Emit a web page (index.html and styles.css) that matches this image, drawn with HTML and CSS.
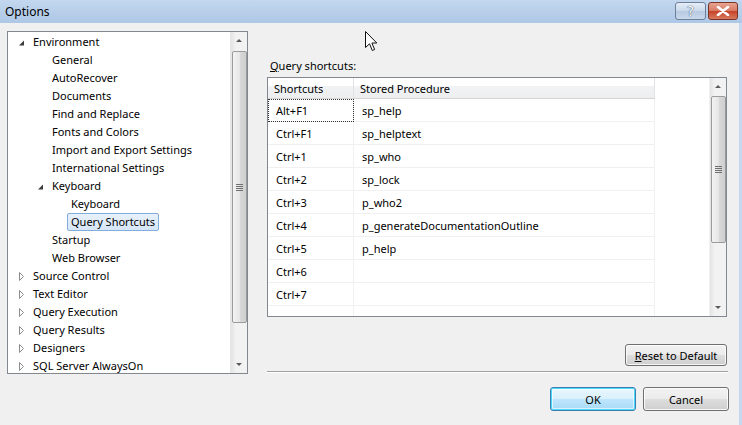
FILE: index.html
```html
<!DOCTYPE html>
<html lang="en">
<head>
    <meta charset="UTF-8">
    <meta name="viewport" content="width=device-width, initial-scale=1.0">
    <title>Options</title>
    <link rel="stylesheet" href="styles.css">
</head>
<body>
    <div class="window">
        <div class="titlebar">
            <span class="title">Options</span>
            <div class="caption">
                <span class="cap cap-help">?</span>
                <span class="cap cap-close">
                    <svg width="14" height="10" viewBox="0 0 14 10"><path d="M2 1 L12 9 M12 1 L2 9" stroke="#fff" stroke-width="2.6" stroke-linecap="round"/></svg>
                </span>
            </div>
        </div>

        <div class="client">
            <!-- options tree -->
            <div class="tree">
                <ul class="nodes">
                    <li class="node l0"><span class="tog"><svg width="16" height="18" viewBox="0 0 16 18"><path d="M11 7.5 L11 12.5 L6 12.5 Z" fill="#3c3c3c"/></svg></span><span class="txt">Environment</span></li>
                    <li class="node l1"><span class="tog"></span><span class="txt">General</span></li>
                    <li class="node l1"><span class="tog"></span><span class="txt">AutoRecover</span></li>
                    <li class="node l1"><span class="tog"></span><span class="txt">Documents</span></li>
                    <li class="node l1"><span class="tog"></span><span class="txt">Find and Replace</span></li>
                    <li class="node l1"><span class="tog"></span><span class="txt">Fonts and Colors</span></li>
                    <li class="node l1"><span class="tog"></span><span class="txt">Import and Export Settings</span></li>
                    <li class="node l1"><span class="tog"></span><span class="txt">International Settings</span></li>
                    <li class="node l1"><span class="tog"><svg width="16" height="18" viewBox="0 0 16 18"><path d="M11 7.5 L11 12.5 L6 12.5 Z" fill="#3c3c3c"/></svg></span><span class="txt">Keyboard</span></li>
                    <li class="node l2"><span class="tog"></span><span class="txt">Keyboard</span></li>
                    <li class="node l2"><span class="tog"></span><span class="txt selected">Query Shortcuts</span></li>
                    <li class="node l1"><span class="tog"></span><span class="txt">Startup</span></li>
                    <li class="node l1"><span class="tog"></span><span class="txt">Web Browser</span></li>
                    <li class="node l0"><span class="tog"><svg width="16" height="18" viewBox="0 0 16 18"><path d="M6.5 5.5 L10.5 9.5 L6.5 13.5 Z" fill="#fff" stroke="#8c8c8c"/></svg></span><span class="txt">Source Control</span></li>
                    <li class="node l0"><span class="tog"><svg width="16" height="18" viewBox="0 0 16 18"><path d="M6.5 5.5 L10.5 9.5 L6.5 13.5 Z" fill="#fff" stroke="#8c8c8c"/></svg></span><span class="txt">Text Editor</span></li>
                    <li class="node l0"><span class="tog"><svg width="16" height="18" viewBox="0 0 16 18"><path d="M6.5 5.5 L10.5 9.5 L6.5 13.5 Z" fill="#fff" stroke="#8c8c8c"/></svg></span><span class="txt">Query Execution</span></li>
                    <li class="node l0"><span class="tog"><svg width="16" height="18" viewBox="0 0 16 18"><path d="M6.5 5.5 L10.5 9.5 L6.5 13.5 Z" fill="#fff" stroke="#8c8c8c"/></svg></span><span class="txt">Query Results</span></li>
                    <li class="node l0"><span class="tog"><svg width="16" height="18" viewBox="0 0 16 18"><path d="M6.5 5.5 L10.5 9.5 L6.5 13.5 Z" fill="#fff" stroke="#8c8c8c"/></svg></span><span class="txt">Designers</span></li>
                    <li class="node l0"><span class="tog"><svg width="16" height="18" viewBox="0 0 16 18"><path d="M6.5 5.5 L10.5 9.5 L6.5 13.5 Z" fill="#fff" stroke="#8c8c8c"/></svg></span><span class="txt">SQL Server AlwaysOn</span></li>
                </ul>
                <div class="vscroll tree-scroll">
                    <span class="arrow up"></span>
                    <div class="thumb"><span class="grip"></span></div>
                    <span class="arrow down"></span>
                </div>
            </div>

            <!-- query shortcuts page -->
            <div class="page">
                <div class="caption-label"><u>Q</u>uery shortcuts:</div>
                <div class="grid">
                    <div class="grid-view">
                        <table class="shortcuts">
                            <thead>
                                <tr><th class="c1">Shortcuts</th><th class="c2">Stored Procedure</th></tr>
                            </thead>
                            <tbody>
                                <tr><td class="c1 focus">Alt+F1</td><td class="c2">sp_help</td></tr>
                                <tr><td class="c1">Ctrl+F1</td><td class="c2">sp_helptext</td></tr>
                                <tr><td class="c1">Ctrl+1</td><td class="c2">sp_who</td></tr>
                                <tr><td class="c1">Ctrl+2</td><td class="c2">sp_lock</td></tr>
                                <tr><td class="c1">Ctrl+3</td><td class="c2">p_who2</td></tr>
                                <tr><td class="c1">Ctrl+4</td><td class="c2">p_generateDocumentationOutline</td></tr>
                                <tr><td class="c1">Ctrl+5</td><td class="c2">p_help</td></tr>
                                <tr><td class="c1">Ctrl+6</td><td class="c2"></td></tr>
                                <tr><td class="c1">Ctrl+7</td><td class="c2"></td></tr>
                                <tr><td class="c1"></td><td class="c2"></td></tr>
                            </tbody>
                        </table>
                    </div>
                    <div class="vscroll grid-scroll">
                        <span class="arrow up"></span>
                        <div class="thumb"><span class="grip"></span></div>
                        <span class="arrow down"></span>
                    </div>
                </div>
                <div class="reset-row">
                    <button class="btn reset"><u>R</u>eset to Default</button>
                </div>
                <div class="separator"></div>
                <div class="actions">
                    <button class="btn default">OK</button>
                    <button class="btn">Cancel</button>
                </div>
            </div>
        </div>

        <svg class="pointer" width="13" height="21" viewBox="0 0 13 21">
            <path d="M0.5 0.5 L0.5 16.5 L4.5 12.8 L7.3 19.5 L9.6 18.5 L6.9 12 L11.8 12 Z" fill="#fff" stroke="#111" stroke-width="1" stroke-linejoin="round"/>
        </svg>
    </div>
</body>
</html>
```

FILE: styles.css
```css
html, body {
    margin: 0;
    padding: 0;
}
body {
    font-family: "Noto Sans", "Open Sans", sans-serif;
    font-size: 11px;
    color: #000;
    background: #f0f0f0;
}
.window {
    position: relative;
    width: 742px;
    height: 425px;
    overflow: hidden;
    display: flex;
    flex-direction: column;
}

/* title bar */
.titlebar {
    height: 23px;
    flex: none;
    display: flex;
    align-items: center;
    justify-content: space-between;
    background: linear-gradient(#c3d7ee, #adc7e6);
    padding: 0 4px 0 5px;
}
.title {
    font-size: 12px;
    line-height: 16px;
}
.caption {
    display: flex;
    gap: 2px;
    align-self: flex-start;
    margin-top: 2px;
}
.cap {
    height: 18px;
    border: 1px solid #6d7f99;
    border-radius: 3px;
    box-sizing: border-box;
    display: flex;
    align-items: center;
    justify-content: center;
}
.cap-help {
    width: 31px;
    background: linear-gradient(#e6eef8 0%, #c9d8ea 50%, #b6c9e1 51%, #c9d9ec 100%);
    color: #fff;
    font-family: "DejaVu Sans", sans-serif;
    font-size: 14px;
    text-shadow: 0 0 1px #35506f, 0 0 1px #35506f;
}
.cap-close {
    width: 30px;
    border-color: #7a3325;
    background: linear-gradient(#e8a593 0%, #d77862 50%, #c7432a 51%, #d67a5e 100%);
}

/* client area */
.client {
    flex: 1;
    display: flex;
    gap: 19px;
    padding: 8px 0 0 7px;
    border-right: 3px solid #c4d7ee;
}

/* tree */
.tree {
    width: 241px;
    height: 343px;
    box-sizing: border-box;
    border: 1px solid #828790;
    background: #fff;
    display: flex;
    flex: none;
}
.nodes {
    list-style: none;
    margin: 0;
    padding: 1px 0 0;
    flex: 1;
    overflow: hidden;
}
.node {
    height: 18px;
    display: flex;
    align-items: center;
    white-space: nowrap;
}
.node.l0 { padding-left: 5px; }
.node.l1 { padding-left: 24px; }
.node.l2 { padding-left: 43px; }
.tog {
    width: 16px;
    height: 18px;
    flex: none;
}
.tog svg {
    display: block;
}
.txt {
    padding: 0 3px;
    border: 1px solid transparent;
    border-radius: 2px;
    line-height: 16px;
}
.txt.selected {
    background: linear-gradient(#e8f1fb, #d6e6f8);
    border-color: #84acdd;
}

/* scroll bars */
.vscroll {
    width: 17px;
    flex: none;
    box-sizing: border-box;
    background: linear-gradient(to right, #e3e3e3, #f2f2f2 30%, #f2f2f2);
    border-left: 1px solid #e6e6e6;
    display: flex;
    flex-direction: column;
    align-items: center;
}
.arrow {
    height: 17px;
    width: 100%;
    flex: none;
    position: relative;
}
.arrow::after {
    content: "";
    position: absolute;
    left: 5px;
    width: 0;
    height: 0;
    border-left: 3px solid transparent;
    border-right: 3px solid transparent;
}
.arrow.up::after {
    top: 7px;
    border-bottom: 3px solid #5a5a5a;
}
.arrow.down::after {
    top: 7px;
    border-top: 3px solid #5a5a5a;
}
.thumb {
    width: 15px;
    box-sizing: border-box;
    border: 1px solid #9b9b9b;
    border-radius: 2px;
    background: linear-gradient(to right, #f3f3f3, #e6e6e6 50%, #d9d9d9 51%, #cfcfcf);
    display: flex;
    align-items: center;
    justify-content: center;
}
.grip {
    width: 7px;
    height: 7px;
    background: repeating-linear-gradient(#6f6f6f 0 1px, transparent 1px 2px);
}
.tree-scroll .thumb {
    height: 272px;
    margin-top: 2px;
}
.tree-scroll .arrow.down {
    margin-top: auto;
}

/* right page */
.page {
    width: 462px;
    display: flex;
    flex-direction: column;
    padding-top: 27px;
}
.caption-label {
    line-height: 16px;
    margin-left: 3px;
    margin-bottom: 3px;
}
.grid {
    width: 460px;
    height: 240px;
    box-sizing: border-box;
    border: 1px solid #828790;
    background: #fff;
    display: flex;
}
.grid-view {
    flex: 1;
    overflow: hidden;
}
.shortcuts {
    border-collapse: collapse;
    table-layout: fixed;
    width: 387px;
}
.shortcuts th {
    height: 20px;
    padding: 0 0 0 6px;
    text-align: left;
    font-weight: normal;
    background: linear-gradient(#ffffff 0%, #ffffff 40%, #f1f2f4 41%, #eceef0 100%);
    border-bottom: 1px solid #d5d5d5;
    border-right: 1px solid #e0e2e5;
}
.shortcuts th.c1 { width: 79px; }
.shortcuts td {
    height: 22px;
    padding: 0 0 0 8px;
    border-bottom: 1px solid #f0f0f0;
    border-right: 1px solid #f0f0f0;
    white-space: nowrap;
}
.shortcuts td.c2 { padding-left: 8px; }
.shortcuts td.focus {
    outline: 1px dotted #333;
    outline-offset: -1px;
}
.grid-scroll {
    border-left: 1px solid #f0f0f0;
}
.grid-scroll .thumb {
    height: 147px;
    margin-top: 1px;
}
.grid-scroll .arrow.down {
    margin-top: auto;
}

.reset-row {
    display: flex;
    justify-content: flex-end;
    margin-top: 27px;
    padding-right: 2px;
}
.btn {
    font-family: inherit;
    font-size: 11px;
    color: #000;
    border: 1px solid #707070;
    border-radius: 3px;
    background: linear-gradient(#f2f2f2 0%, #ebebeb 50%, #dddddd 51%, #cfcfcf 100%);
    box-shadow: inset 0 0 0 1px rgba(255, 255, 255, 0.8);
    padding: 0;
    height: 24px;
    width: 86px;
}
.btn.reset {
    height: 22px;
    width: 102px;
}
.btn.default {
    border-color: #3c7fb1;
    box-shadow: inset 0 0 0 1px #48d8fb, inset 0 0 0 2px rgba(255, 255, 255, 0.6);
    background: linear-gradient(#eaf6fd 0%, #d9f0fc 50%, #bee6fd 51%, #a7d9f5 100%);
}
.separator {
    margin-top: 5px;
    height: 1px;
    width: 461px;
    background: #a0a0a0;
    border-bottom: 1px solid #fff;
}
.actions {
    display: flex;
    justify-content: flex-end;
    gap: 7px;
    margin-top: 14px;
}

/* mouse pointer over the dialog */
.pointer {
    position: absolute;
    left: 365px;
    top: 31px;
}
```
